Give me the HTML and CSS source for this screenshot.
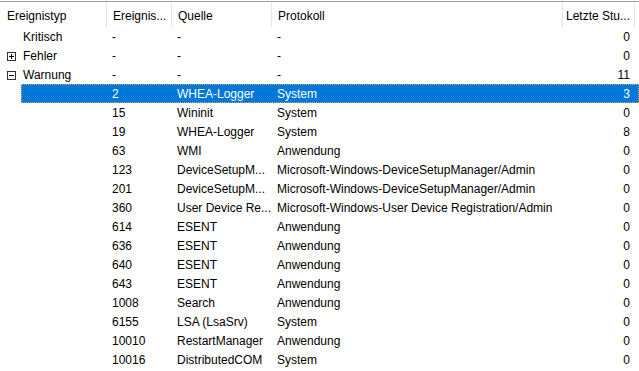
FILE: index.html
```html
<!DOCTYPE html>
<html lang="de">
<head>
    <meta charset="UTF-8">
    <title>Ereignisübersicht</title>
    <link rel="stylesheet" href="styles.css">
</head>
<body>
    <div class="list">
        <div class="head">
            <div class="hcell first">Ereignistyp</div>
            <div class="hcell">Ereignis...</div>
            <div class="hcell">Quelle</div>
            <div class="hcell">Protokoll</div>
            <div class="hcell num">Letzte Stu...</div>
        </div>

        <div class="row group">
            <div class="cell type"><span class="toggle"></span>Kritisch</div>
            <div class="cell">-</div>
            <div class="cell">-</div>
            <div class="cell">-</div>
            <div class="cell num">0</div>
        </div>
        <div class="row group">
            <div class="cell type">
                <svg class="toggle" width="9" height="9" viewBox="0 0 9 9"><rect x="0.5" y="0.5" width="8" height="8" fill="none" stroke="#333"/><path d="M2 4.5h5M4.5 2v5" stroke="#000"/></svg>Fehler
            </div>
            <div class="cell">-</div>
            <div class="cell">-</div>
            <div class="cell">-</div>
            <div class="cell num">0</div>
        </div>
        <div class="row group">
            <div class="cell type">
                <svg class="toggle" width="9" height="9" viewBox="0 0 9 9"><rect x="0.5" y="0.5" width="8" height="8" fill="none" stroke="#333"/><path d="M2 4.5h5" stroke="#000"/></svg>Warnung
            </div>
            <div class="cell">-</div>
            <div class="cell">-</div>
            <div class="cell">-</div>
            <div class="cell num">11</div>
        </div>

        <div class="row child selected">
            <div class="cell"></div><div class="cell">2</div><div class="cell">WHEA-Logger</div><div class="cell">System</div><div class="cell num">3</div>
        </div>
        <div class="row child">
            <div class="cell"></div><div class="cell">15</div><div class="cell">Wininit</div><div class="cell">System</div><div class="cell num">0</div>
        </div>
        <div class="row child">
            <div class="cell"></div><div class="cell">19</div><div class="cell">WHEA-Logger</div><div class="cell">System</div><div class="cell num">8</div>
        </div>
        <div class="row child">
            <div class="cell"></div><div class="cell">63</div><div class="cell">WMI</div><div class="cell">Anwendung</div><div class="cell num">0</div>
        </div>
        <div class="row child">
            <div class="cell"></div><div class="cell">123</div><div class="cell">DeviceSetupM...</div><div class="cell">Microsoft-Windows-DeviceSetupManager/Admin</div><div class="cell num">0</div>
        </div>
        <div class="row child">
            <div class="cell"></div><div class="cell">201</div><div class="cell">DeviceSetupM...</div><div class="cell">Microsoft-Windows-DeviceSetupManager/Admin</div><div class="cell num">0</div>
        </div>
        <div class="row child">
            <div class="cell"></div><div class="cell">360</div><div class="cell">User Device Re...</div><div class="cell">Microsoft-Windows-User Device Registration/Admin</div><div class="cell num">0</div>
        </div>
        <div class="row child">
            <div class="cell"></div><div class="cell">614</div><div class="cell">ESENT</div><div class="cell">Anwendung</div><div class="cell num">0</div>
        </div>
        <div class="row child">
            <div class="cell"></div><div class="cell">636</div><div class="cell">ESENT</div><div class="cell">Anwendung</div><div class="cell num">0</div>
        </div>
        <div class="row child">
            <div class="cell"></div><div class="cell">640</div><div class="cell">ESENT</div><div class="cell">Anwendung</div><div class="cell num">0</div>
        </div>
        <div class="row child">
            <div class="cell"></div><div class="cell">643</div><div class="cell">ESENT</div><div class="cell">Anwendung</div><div class="cell num">0</div>
        </div>
        <div class="row child">
            <div class="cell"></div><div class="cell">1008</div><div class="cell">Search</div><div class="cell">Anwendung</div><div class="cell num">0</div>
        </div>
        <div class="row child">
            <div class="cell"></div><div class="cell">6155</div><div class="cell">LSA (LsaSrv)</div><div class="cell">System</div><div class="cell num">0</div>
        </div>
        <div class="row child">
            <div class="cell"></div><div class="cell">10010</div><div class="cell">RestartManager</div><div class="cell">Anwendung</div><div class="cell num">0</div>
        </div>
        <div class="row child">
            <div class="cell"></div><div class="cell">10016</div><div class="cell">DistributedCOM</div><div class="cell">System</div><div class="cell num">0</div>
        </div>
    </div>
</body>
</html>
```

FILE: styles.css
```css
* {
    margin: 0;
    padding: 0;
    box-sizing: border-box;
}
body {
    background: #ffffff;
    color: #000000;
    font-family: 'Liberation Sans', Arial, sans-serif;
    font-size: 12px;
    padding-top: 1px;
}
.list {
    width: 639px;
    border-top: 1px solid #a0a0a0;
    overflow: hidden;
}
.head {
    display: grid;
    grid-template-columns: 106px 65px 100px 291px 73px 4px;
    height: 25px;
}
.hcell {
    line-height: 24px;
    padding-top: 2px;
    padding-left: 6px;
    border-left: 1px solid #e5e5e5;
    white-space: nowrap;
    overflow: hidden;
}
.hcell.first {
    padding-left: 7px;
    border-left: none;
}
.hcell.num {
    text-align: right;
    padding-left: 0;
    padding-right: 4px;
    border-right: 1px solid #e5e5e5;
}
.row {
    display: grid;
    height: 19px;
    line-height: 19px;
    white-space: nowrap;
}
.row.group {
    grid-template-columns: 106px 65px 100px 291px 77px;
}
.row.child {
    margin-left: 21px;
    grid-template-columns: 85px 65px 100px 291px 77px;
}
.cell {
    padding-top: 1px;
    padding-left: 6px;
}
.cell.type {
    display: flex;
    align-items: center;
    padding-left: 7px;
}
.toggle {
    display: inline-block;
    width: 9px;
    height: 9px;
    margin-right: 7px;
    flex-shrink: 0;
}
.cell.num {
    text-align: right;
    padding-left: 0;
    padding-right: 9px;
}
.row.selected {
    background: #0078d7;
    color: #ffffff;
    outline: 1px dotted #e0a060;
    outline-offset: -1px;
}
```
